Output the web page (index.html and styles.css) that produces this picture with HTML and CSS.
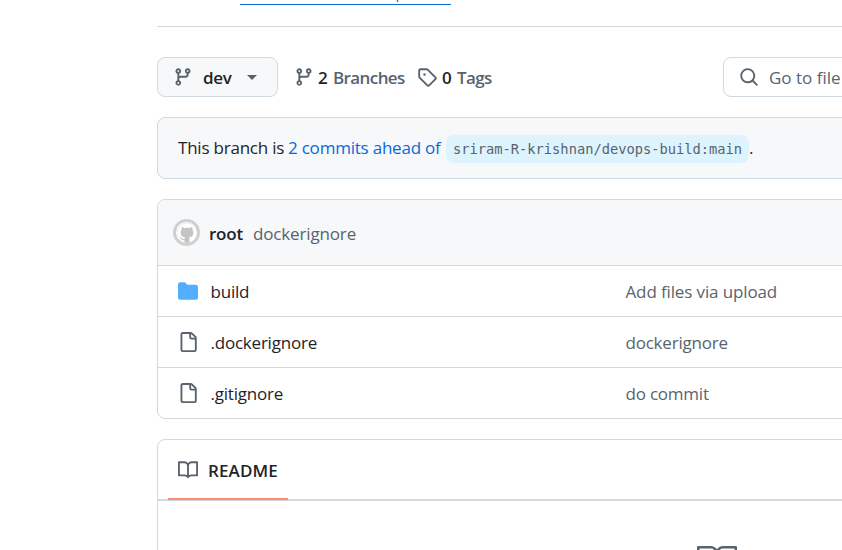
FILE: index.html
```
<!DOCTYPE html>
<html lang="en">
<head>
<meta charset="utf-8">
<title>devops-build</title>
<link rel="stylesheet" href="styles.css">
</head>
<body>
<svg class="defs" aria-hidden="true">
  <symbol id="branch" viewBox="0 0 16 16"><path d="M9.5 3.25a2.25 2.25 0 1 1 3 2.122V6A2.5 2.5 0 0 1 10 8.5H6a1 1 0 0 0-1 1v1.128a2.251 2.251 0 1 1-1.5 0V5.372a2.25 2.25 0 1 1 1.5 0v1.836A2.493 2.493 0 0 1 6 7h4a1 1 0 0 0 1-1v-.628A2.25 2.25 0 0 1 9.5 3.25Zm-6 0a.75.75 0 1 0 1.5 0 .75.75 0 0 0-1.5 0Zm8.25-.75a.75.75 0 1 0 0 1.5.75.75 0 0 0 0-1.5ZM4.25 12a.75.75 0 1 0 0 1.5.75.75 0 0 0 0-1.5Z"/></symbol>
  <symbol id="tag" viewBox="0 0 16 16"><path d="M1 7.775V2.75C1 1.784 1.784 1 2.75 1h5.025c.464 0 .91.184 1.238.513l6.25 6.25a1.75 1.75 0 0 1 0 2.474l-5.026 5.026a1.75 1.75 0 0 1-2.474 0l-6.25-6.25A1.752 1.752 0 0 1 1 7.775Zm1.5 0c0 .066.026.13.073.177l6.25 6.25a.25.25 0 0 0 .354 0l5.025-5.025a.25.25 0 0 0 0-.354l-6.25-6.25a.25.25 0 0 0-.177-.073H2.75a.25.25 0 0 0-.25.25ZM6 5a1 1 0 1 1 0 2 1 1 0 0 1 0-2Z"/></symbol>
  <symbol id="search" viewBox="0 0 16 16"><path d="M10.68 11.74a6 6 0 0 1-7.922-8.982 6 6 0 0 1 8.982 7.922l3.04 3.04a.749.749 0 0 1-.326 1.275.749.749 0 0 1-.734-.215ZM11.5 7a4.499 4.499 0 1 0-8.997 0A4.499 4.499 0 0 0 11.5 7Z"/></symbol>
  <symbol id="folder" viewBox="0 0 16 16"><path d="M1.75 1A1.75 1.75 0 0 0 0 2.75v10.5C0 14.216.784 15 1.75 15h12.5A1.75 1.75 0 0 0 16 13.25v-8.5A1.75 1.75 0 0 0 14.25 3H7.5a.25.25 0 0 1-.2-.1l-.9-1.2C6.07 1.26 5.55 1 5 1H1.75Z"/></symbol>
  <symbol id="file" viewBox="0 0 16 16"><path d="M2 1.75C2 .784 2.784 0 3.75 0h6.586c.464 0 .909.184 1.237.513l2.914 2.914c.329.328.513.773.513 1.237v9.586A1.75 1.75 0 0 1 13.25 16h-9.5A1.75 1.75 0 0 1 2 14.25Zm1.75-.25a.25.25 0 0 0-.25.25v12.5c0 .138.112.25.25.25h9.5a.25.25 0 0 0 .25-.25V6h-2.75A1.75 1.75 0 0 1 9 4.25V1.5Zm6.75.062V4.25c0 .138.112.25.25.25h2.688l-.011-.013-2.914-2.914-.013-.011Z"/></symbol>
  <symbol id="book" viewBox="0 0 16 16"><path d="M0 1.75A.75.75 0 0 1 .75 1h4.253c1.227 0 2.317.59 3 1.501A3.743 3.743 0 0 1 11.006 1h4.245a.75.75 0 0 1 .75.75v10.5a.75.75 0 0 1-.75.75h-4.507a2.25 2.25 0 0 0-1.591.659l-.622.621a.75.75 0 0 1-1.06 0l-.622-.621A2.25 2.25 0 0 0 5.258 13H.75a.75.75 0 0 1-.75-.75Zm7.251 10.324.004-5.073-.002-2.253A2.25 2.25 0 0 0 5.003 2.5H1.5v9h3.757a3.75 3.75 0 0 1 1.994.574ZM8.755 4.75l-.004 7.322a3.752 3.752 0 0 1 1.992-.572H14.5v-9h-3.495a2.25 2.25 0 0 0-2.25 2.25Z"/></symbol>
  <symbol id="book-large" viewBox="0 0 24 24"><path d="M0 3.75A.75.75 0 0 1 .75 3h7.497c1.566 0 2.945.8 3.751 2.014A4.495 4.495 0 0 1 15.75 3h7.5a.75.75 0 0 1 .75.75v15.063a.752.752 0 0 1-.755.75l-7.682-.052a3 3 0 0 0-2.142.878l-.89.891a.75.75 0 0 1-1.061 0l-.902-.901a2.996 2.996 0 0 0-2.121-.879H.75a.75.75 0 0 1-.75-.75Zm12.75 15.232a4.503 4.503 0 0 1 2.823-.971l6.927.047V4.5h-6.75a3 3 0 0 0-3 3ZM11.247 7.497a3 3 0 0 0-3-2.997H1.5V18h6.947c1.018 0 2.006.346 2.803.98Z"/></symbol>
  <symbol id="mark" viewBox="0 0 16 16"><path d="M8 0C3.58 0 0 3.58 0 8c0 3.54 2.29 6.53 5.47 7.59.4.07.55-.17.55-.38 0-.19-.01-.82-.01-1.49-2.01.37-2.53-.49-2.69-.94-.09-.23-.48-.94-.82-1.13-.28-.15-.68-.52-.01-.53.63-.01 1.08.58 1.23.82.72 1.21 1.87.87 2.33.66.07-.52.28-.87.51-1.07-1.78-.2-3.64-.89-3.64-3.95 0-.87.31-1.59.82-2.15-.08-.2-.36-1.02.08-2.12 0 0 .67-.21 2.2.82.64-.18 1.32-.27 2-.27s1.36.09 2 .27c1.53-1.04 2.2-.82 2.2-.82.44 1.1.16 1.92.08 2.12.51.56.82 1.27.82 2.15 0 3.07-1.87 3.75-3.65 3.95.29.25.54.73.54 1.48 0 1.07-.01 1.93-.01 2.2 0 .21.15.46.55.38A8.01 8.01 0 0 0 16 8c0-4.42-3.58-8-8-8Z"/></symbol>
</svg>
<main class="repo">
  <div class="fork"><a class="fork-link">sriram-R-krishnan/devops-build</a></div>
  <div class="toolbar">
    <button class="branch-button"><svg class="icon"><use href="#branch"/></svg><span class="branch-name">dev</span><span class="caret"></span></button>
    <a class="stat branches"><svg class="icon"><use href="#branch"/></svg><b>2</b><span class="stat-label">Branches</span></a>
    <a class="stat tags"><svg class="icon"><use href="#tag"/></svg><b>0</b><span class="stat-label">Tags</span></a>
    <div class="search"><svg class="icon"><use href="#search"/></svg><span class="search-text">Go to file</span></div>
  </div>
  <div class="banner"><span class="lead">This branch is</span><a class="ahead">2 commits ahead of</a><code>sriram-R-krishnan/devops-build:main</code><span>.</span></div>
  <section class="files">
    <div class="latest"><span class="avatar"><svg><use href="#mark"/></svg></span><b class="author">root</b><span class="message">dockerignore</span></div>
    <div class="row"><svg class="icon folder"><use href="#folder"/></svg><span class="name">build</span><span class="commit upload">Add files via upload</span></div>
    <div class="row"><svg class="icon"><use href="#file"/></svg><span class="name">.dockerignore</span><span class="commit">dockerignore</span></div>
    <div class="row"><svg class="icon"><use href="#file"/></svg><span class="name">.gitignore</span><span class="commit">do commit</span></div>
  </section>
  <section class="readme">
    <div class="tabs"><div class="tab"><svg class="icon"><use href="#book"/></svg><span class="tab-label">README</span></div></div>
    <div class="empty"><svg class="big"><use href="#book-large"/></svg></div>
  </section>
</main>
</body>
</html>
```
FILE: styles.css
```
* { box-sizing: border-box; }
html, body { height: 100%; overflow: hidden; }
body { margin: 0; background: #fff; color: #1f2328; font: 17px/26px "Open Sans", "Noto Sans", sans-serif; letter-spacing: -0.22px; }
.defs { display: none; }
.repo { width: 1100px; height: 550px; margin-left: 157px; overflow: hidden; }
.icon { display: block; width: 20px; height: 20px; fill: #59636e; flex: none; }
b { font-weight: 600; }
span, a, b, code { white-space: nowrap; }

.fork { height: 27px; padding-left: 83px; border-bottom: 1px solid #d1d9e0; }
.fork-link { display: flex; align-items: flex-end; width: 211px; height: 5px; padding-bottom: 2px; border-bottom: 1px solid #0969da; color: #0969da; font-size: 15px; line-height: 20px; letter-spacing: -0.42px; overflow: hidden; }

.toolbar { display: flex; align-items: center; height: 40px; margin: 30px 0 20px; }
.branch-button { display: flex; align-items: center; width: 121px; height: 40px; padding: 0 0 0 15px; border: 1px solid #d1d9e0; border-radius: 8px; background: #f6f8fa; color: inherit; font: inherit; font-weight: 600; }
.branch-name { width: 44px; margin-left: 10px; padding-top: 1px; text-align: left; letter-spacing: -0.3px; }
.caret { border: 5px solid transparent; border-top-color: #59636e; border-bottom: 0; }
.stat { display: flex; align-items: center; color: #59636e; font-weight: 600; letter-spacing: -0.6px; }
.stat b { width: 15px; padding-top: 1px; color: #1f2328; }
.stat-label { padding-top: 1px; }
.branches { width: 123px; margin-left: 16px; }
.branches b { margin-left: 4px; }
.tags b { margin-left: 5px; }
.search { display: flex; align-items: center; width: 300px; height: 40px; margin-left: auto; margin-right: 234px; padding-left: 15px; border: 1px solid #d1d9e0; border-radius: 8px; color: #59636e; }
.search-text { margin-left: 10px; padding-top: 2px; letter-spacing: 0; }

.banner { display: flex; align-items: center; height: 62px; margin-bottom: 20px; padding-left: 20px; border: 1px solid #d1d9e0; border-radius: 8px; background: #f6f8fa; }
.lead { width: 110px; }
.ahead { width: 158px; color: #0969da; }
code { width: 303px; height: 28px; margin-top: 1px; padding: 0 7px; border-radius: 8px; background: #ddf4ff; color: #59636e; font: 13.72px/29px "DejaVu Sans Mono", monospace; letter-spacing: 0; }

.files { height: 220px; margin-bottom: 20px; border: 1px solid #d1d9e0; border-radius: 8px; overflow: hidden; }
.latest { display: flex; align-items: center; height: 65px; padding-left: 15px; background: #f6f8fa; }
.avatar { display: grid; place-items: center; width: 27px; height: 27px; border: 3px solid #d0d0d0; border-radius: 50%; background: #fff; }
.avatar svg { width: 20px; height: 20px; fill: #fff; background: #c4c4c4; border-radius: 50%; }
.author { width: 43px; margin-left: 9px; padding-top: 2px; }
.message { margin-left: 1px; padding-top: 2px; letter-spacing: -0.15px; }
.message, .commit { color: #59636e; }
.row { display: flex; align-items: center; height: 51px; padding-left: 20px; border-top: 1px solid #d1d9e0; }
.folder { fill: #54aeff; }
.name { width: 415px; margin-left: 12.5px; padding-top: 1px; }
.commit { padding-top: 1px; }
.upload { letter-spacing: -0.13px; }

.readme { height: 400px; border: 1px solid #d1d9e0; border-radius: 8px; }
.tabs { height: 61px; padding-left: 10px; border-bottom: 2px solid #d1d9e0; }
.tab { display: flex; align-items: center; width: 120px; height: 60px; padding: 1px 0 0 10px; border-bottom: 2px solid #fd8c73; font-weight: 600; }
.tab-label { margin-left: 10px; padding-top: 2px; letter-spacing: 0.1px; }
.empty { padding: 40px 0 0 539px; }
.big { display: block; width: 40px; height: 40px; fill: #59636e; }
```
